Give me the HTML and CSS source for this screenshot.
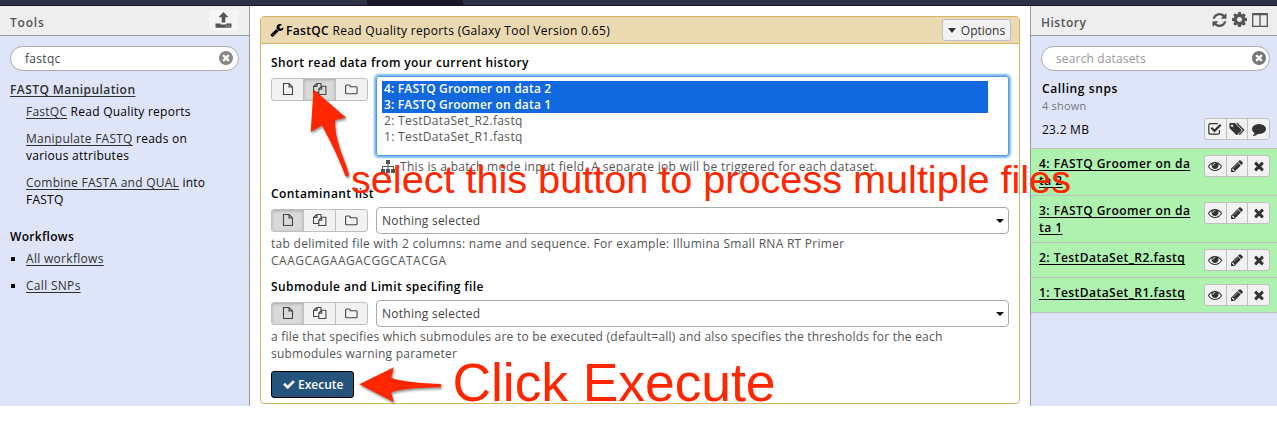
FILE: index.html
```html
<!DOCTYPE html>
<html lang="en">
<head>
<meta charset="utf-8">
<title>Galaxy</title>
<link rel="stylesheet" href="styles.css">
</head>
<body>
<svg class="defs" width="0" height="0">
  <symbol id="wrench" viewBox="0 0 1792 1792"><path d="M448 1472q0-26-19-45t-45-19-45 19-19 45 19 45 45 19 45-19 19-45zm644-420l-682 682q-37 37-90 37-52 0-91-37l-106-108q-38-36-38-90 0-53 38-91l681-681q39 98 114.5 173.5t173.5 114.5zm634-435q0 39-23 106-47 134-164.5 217.5t-258.5 83.5q-185 0-316.5-131.5t-131.5-316.5 131.5-316.5 316.5-131.5q58 0 121.5 16.5t107.5 46.5q16 11 16 28t-16 28l-293 169v224l193 107q5-3 79-48.5t135.5-81 70.5-35.5q15 0 23.5 10t8.5 25z"/></symbol>
  <symbol id="times" viewBox="0 0 1792 1792"><path d="M1490 1322q0 40-28 68l-136 136q-28 28-68 28t-68-28l-294-294-294 294q-28 28-68 28t-68-28l-136-136q-28-28-28-68t28-68l294-294-294-294q-28-28-28-68t28-68l136-136q28-28 68-28t68 28l294 294 294-294q28-28 68-28t68 28l136 136q28 28 28 68t-28 68l-294 294 294 294q28 28 28 68z"/></symbol>
  <symbol id="clear" viewBox="128 128 1536 1536"><path d="M1277 1122q0-26-19-45l-181-181 181-181q19-19 19-45 0-27-19-46l-90-90q-19-19-46-19-26 0-45 19l-181 181-181-181q-19-19-45-19-27 0-46 19l-90 90q-19 19-19 46 0 26 19 45l181 181-181 181q-19 19-19 45 0 27 19 46l90 90q19 19 46 19 26 0 45-19l181-181 181 181q19 19 45 19 27 0 46-19l90-90q19-19 19-46zm387-226q0 209-103 385.5t-279.5 279.5-385.5 103-385.5-103-279.5-279.5-103-385.5 103-385.5 279.5-279.5 385.5-103 385.5 103 279.5 279.5 103 385.5z"/></symbol>
  <symbol id="check" viewBox="0 0 1792 1792"><path d="M1671 566q0 40-28 68l-724 724-136 136q-28 28-68 28t-68-28l-136-136-362-362q-28-28-28-68t28-68l136-136q28-28 68-28t68 28l294 295 656-657q28-28 68-28t68 28l136 136q28 28 28 68z"/></symbol>
  <symbol id="pencil" viewBox="0 0 1792 1792"><path d="M491 1536l91-91-235-235-91 91v107h128v128h107zm523-928q0-22-22-22-10 0-17 7l-542 542q-7 7-7 17 0 22 22 22 10 0 17-7l542-542q7-7 7-17zm-54-192l416 416-832 832h-416v-416zm683 96q0 53-37 90l-166 166-416-416 166-165q36-38 90-38 53 0 91 38l235 234q37 39 37 91z"/></symbol>
  <symbol id="eye" viewBox="0 0 1792 1792"><path d="M1664 960q-152-236-381-353 61 104 61 225 0 185-131.5 316.5t-316.5 131.5-316.5-131.5-131.5-316.5q0-121 61-225-229 117-381 353 133 205 333.5 326.5t434.5 121.5 434.5-121.5 333.5-326.5zm-720-384q0-20-14-34t-34-14q-125 0-214.5 89.5t-89.5 214.5q0 20 14 34t34 14 34-14 14-34q0-86 61-147t147-61q20 0 34-14t14-34zm848 384q0 34-20 69-140 230-376.5 368.5t-499.5 138.5-499.5-139-376.5-368q-20-35-20-69t20-69q140-229 376.5-368t499.5-139 499.5 139 376.5 368q20 35 20 69z"/></symbol>
  <symbol id="refresh" viewBox="128 128 1536 1536"><path d="M1639 1056q0 5-1 7-64 268-268 434.5t-478 166.5q-146 0-282.5-55t-243.5-157l-129 129q-19 19-45 19t-45-19-19-45v-448q0-26 19-45t45-19h448q26 0 45 19t19 45-19 45l-137 137q71 66 161 102t187 36q134 0 250-65t186-179q11-17 53-117 8-23 30-23h192q13 0 22.5 9.5t9.5 22.5zm25-800v448q0 26-19 45t-45 19h-448q-26 0-45-19t-19-45 19-45l138-138q-148-137-349-137-134 0-250 65t-186 179q-11 17-53 117-8 23-30 23h-199q-13 0-22.5-9.5t-9.5-22.5v-7q65-268 270-434.5t480-166.5q146 0 284 55.5t245 156.5l130-129q19-19 45-19t45 19 19 45z"/></symbol>
  <symbol id="cog" viewBox="128 128 1536 1536"><path d="M1152 896q0-106-75-181t-181-75-181 75-75 181 75 181 181 75 181-75 75-181zm512-109v222q0 12-8 23t-20 13l-185 28q-19 54-39 91 35 50 107 138 10 12 10 25t-9 23q-27 37-99 108t-94 71q-12 0-26-9l-138-108q-44 23-91 38-16 136-29 186-7 28-36 28h-222q-14 0-24.5-8.5t-11.5-21.5l-28-184q-49-16-90-37l-141 107q-10 9-25 9-14 0-25-11-126-114-165-168-7-10-7-23 0-12 8-23 15-21 51-66.5t54-70.5q-27-50-41-99l-183-27q-13-2-21-12.5t-8-23.5v-222q0-12 8-23t19-13l186-28q14-46 39-92-40-57-107-138-10-12-10-24 0-10 9-23 26-36 98.5-107.5t94.5-71.5q13 0 26 10l138 107q44-23 91-38 16-136 29-186 7-28 36-28h222q14 0 24.5 8.5t11.5 21.5l28 184q49 16 90 37l142-107q9-9 24-9 13 0 25 10 129 119 165 170 7 8 7 22 0 12-8 23-15 21-51 66.5t-54 70.5q26 50 41 98l183 28q13 2 21 12.5t8 23.5z"/></symbol>
  <symbol id="comment" viewBox="0 0 1792 1792"><path d="M1792 896q0 174-120 321.5t-326 233-450 85.5q-70 0-145-8-198 175-460 242-49 14-114 22-17 2-30.5-9t-17.5-29v-1q-3-4-.5-12t2-10 4.5-9.5l6-9 7-8.5 8-9q7-8 31-34.5t34.5-38 31-39.5 32.5-51 27-59 26-76q-157-89-247.5-220t-90.5-281q0-174 120-321.5t326-233 450-85.5 450 85.5 326 233 120 321.5z"/></symbol>
  <symbol id="upload" viewBox="0 0 16 16"><path d="M8 0 13 5.2H9.8V10.500H6.200V5.200H3zM0 11.500h5.200v1h5.600v-1H16v3.500a.8.800 0 0 1-.8.800H.8A.8.800 0 0 1 0 15zM11 13.500v1h1v-1zM13.200 13.500v1h1v-1z" fill-rule="evenodd"/></symbol>
  <symbol id="columns" viewBox="0 0 16 14"><path d="M.7.700h14.600v12.600H.7zM8 1v12M1 1.500h14" fill="none" stroke="currentColor" stroke-width="1.300"/></symbol>
  <symbol id="checkbox" viewBox="0 0 14 14"><path d="M11.500 8v2.500a1.700 1.700 0 0 1-1.700 1.700H2.500A1.700 1.700 0 0 1 .8 10.500V3.300a1.700 1.700 0 0 1 1.700-1.700h7.300" fill="none" stroke="currentColor" stroke-width="1.200"/><path d="M3.400 5.800 6.500 8.900 12.700 2.700" fill="none" stroke="currentColor" stroke-width="2.200"/></symbol>
  <symbol id="tags" viewBox="0 0 16 14"><path d="M1 1h4.800L12.300 7.500a1 1 0 0 1 0 1.300l-3.900 3.900a1 1 0 0 1-1.300 0L.5 6.200V1.500A.5.500 0 0 1 1 1zM3 2.500a1.200 1.200 0 1 0 .1 0z" fill-rule="evenodd"/><path d="M8 1.300 14.700 8.100 10.200 12.800" fill="none" stroke="currentColor" stroke-width="1.300"/></symbol>
  <symbol id="sitemap" viewBox="0 0 14 13"><path d="M5 0h4v4H7.500v2H13v3h1v4h-4V9h2V7H7.500v2H9v4H5V9h1.500V7H2v2h2v4H0V9h1V6h5.500V4H5z"/></symbol>
  <symbol id="file" viewBox="0 0 12 14"><path d="M1.500 1.500h5.500l3.500 3.500v7.500h-9zM7 1.500V5h3.500" fill="none" stroke="currentColor" stroke-width="1.100"/></symbol>
  <symbol id="files" viewBox="0 0 14 14"><path d="M5.500 10.500h-5V4.500l3.500-3h4v2.700M4 1.500v3H.5M8.700 4.300h4.200v8.200H5.800V7zM8.700 4.300v3H5.800" fill="none" stroke="currentColor" stroke-width="1.100" stroke-linejoin="round"/></symbol>
  <symbol id="folder" viewBox="0 0 13 11"><path d="M.6 8.800V2a1 1 0 0 1 1-1h2.600a1 1 0 0 1 1 1v.7h5.900a1 1 0 0 1 1 1v5.100a1 1 0 0 1-1 1H1.600a1 1 0 0 1-1-1z" fill="none" stroke="currentColor" stroke-width="1.100"/></symbol>
</svg>

<header class="masthead"><span class="masthead-tab"></span></header>

<main class="workspace">
  <aside class="panel tools">
    <div class="panel-head"><h2>Tools</h2><span class="upload-btn"><svg class="i16"><use href="#upload"/></svg></span></div>
    <div class="search"><span class="t-query">fastqc</span><svg class="i14"><use href="#clear"/></svg></div>
    <h3 class="section"><a class="t-section">FASTQ Manipulation</a></h3>
    <ul class="tool-list">
      <li><a>FastQC</a> Read Quality reports</li>
      <li><a>Manipulate FASTQ</a> reads on<br>various attributes</li>
      <li><a>Combine FASTA and QUAL</a> into<br>FASTQ</li>
    </ul>
    <h3 class="workflows">Workflows</h3>
    <ul class="workflow-list">
      <li><a>All workflows</a></li>
      <li><a>Call SNPs</a></li>
    </ul>
  </aside>

  <section class="center">
    <form class="tool-form">
      <div class="form-head">
        <svg class="i14 wrench"><use href="#wrench"/></svg>
        <span class="form-title"><b>FastQC</b> Read Quality reports (Galaxy Tool Version 0.65)</span>
        <span class="options"><i class="caret"></i>Options</span>
      </div>
      <div class="form-body">
        <label class="first">Short read data from your current history</label>
        <div class="row multi">
          <div class="btns"><span><svg class="file"><use href="#file"/></svg></span><span class="on"><svg class="files"><use href="#files"/></svg></span><span><svg class="folder"><use href="#folder"/></svg></span></div>
          <div class="listbox">
            <div class="sel">4: FASTQ Groomer on data 2</div>
            <div class="sel">3: FASTQ Groomer on data 1</div>
            <div>2: TestDataSet_R2.fastq</div>
            <div>1: TestDataSet_R1.fastq</div>
          </div>
        </div>
        <p class="batch"><svg class="sitemap"><use href="#sitemap"/></svg>This is a batch mode input field. A separate job will be triggered for each dataset.</p>
        <label class="l-contaminant">Contaminant list</label>
        <div class="row">
          <div class="btns"><span class="on"><svg class="file"><use href="#file"/></svg></span><span><svg class="files"><use href="#files"/></svg></span><span><svg class="folder"><use href="#folder"/></svg></span></div>
          <div class="select">Nothing selected<i class="caret small"></i></div>
        </div>
        <p class="help h1">tab delimited file with 2 columns: name and sequence. For example: Illumina Small RNA RT Primer<br><span class="seq">CAAGCAGAAGACGGCATACGA</span></p>
        <label class="l-sub">Submodule and Limit specifing file</label>
        <div class="row">
          <div class="btns"><span class="on"><svg class="file"><use href="#file"/></svg></span><span><svg class="files"><use href="#files"/></svg></span><span><svg class="folder"><use href="#folder"/></svg></span></div>
          <div class="select">Nothing selected<i class="caret small"></i></div>
        </div>
        <p class="help h2">a file that specifies which submodules are to be executed (default=all) and also specifies the thresholds for the each<br>submodules warning parameter</p>
        <span class="execute"><svg class="i12"><use href="#check"/></svg>Execute</span>
      </div>
    </form>
  </section>

  <aside class="panel history">
    <div class="panel-head"><h2>History</h2><span class="head-icons"><svg class="refresh"><use href="#refresh"/></svg><svg class="cog"><use href="#cog"/></svg><svg class="columns"><use href="#columns"/></svg></span></div>
    <div class="search placeholder"><span>search datasets</span><svg class="i14"><use href="#clear"/></svg></div>
    <div class="meta">
      <h3>Calling snps</h3>
      <p class="shown">4 shown</p>
      <div class="size"><span>23.2 MB</span><div class="acts"><span><svg><use href="#checkbox"/></svg></span><span><svg class="tags"><use href="#tags"/></svg></span><span><svg><use href="#comment"/></svg></span></div></div>
    </div>
    <div class="dataset tall"><a>4: FASTQ Groomer on da<br>ta 2</a><div class="acts"><span><svg><use href="#eye"/></svg></span><span><svg><use href="#pencil"/></svg></span><span><svg><use href="#times"/></svg></span></div></div>
    <div class="dataset tall"><a>3: FASTQ Groomer on da<br>ta 1</a><div class="acts"><span><svg><use href="#eye"/></svg></span><span><svg><use href="#pencil"/></svg></span><span><svg><use href="#times"/></svg></span></div></div>
    <div class="dataset"><a>2: TestDataSet_R2.fastq</a><div class="acts"><span><svg><use href="#eye"/></svg></span><span><svg><use href="#pencil"/></svg></span><span><svg><use href="#times"/></svg></span></div></div>
    <div class="dataset"><a>1: TestDataSet_R1.fastq</a><div class="acts"><span><svg><use href="#eye"/></svg></span><span><svg><use href="#pencil"/></svg></span><span><svg><use href="#times"/></svg></span></div></div>
  </aside>
</main>

<svg class="annotations" width="1277" height="428" viewBox="0 0 1277 428">
  <g class="arrows">
    <path d="M313.500 89.500 346.300 117.700 335.300 120Q334 131 341 152Q347 167 349 174.500Q347.500 178 345.500 176Q336 151 322 125.500L310.700 132z"/>
    <path d="M359.300 384.300 393.800 367.300 391.300 377.500Q400 382.200 440.500 384Q442.500 385.500 440.500 387.200Q400 388 391.300 392.500L393.800 402.300z"/>
  </g>
  <text x="351" y="193.300" font-size="39.700" textLength="720">select this button to process multiple files</text>
  <text x="452.500" y="401" font-size="53.500" textLength="323">Click Execute</text>
</svg>
</body>
</html>
```
FILE: styles.css
```css
* { box-sizing: border-box; }
body {
  margin: 0;
  width: 1277px;
  height: 428px;
  overflow: hidden;
  background: #fff;
  color: #000;
  font: 12px/17px "Open Sans", "Noto Sans", sans-serif;
}
h2, h3, p, ul { margin: 0; padding: 0; font-size: 12px; line-height: 17px; }
ul { list-style: none; }
svg { display: block; fill: currentColor; flex: none; }
.defs { position: absolute; }
b, h2, h3, label { font-weight: 600; }

.masthead { height: 6px; background: #2c3143; border-bottom: 1px solid #1a1128; padding-left: 367px; }
.masthead-tab { display: block; width: 96px; height: 5px; background: #181824; }

.workspace { display: flex; height: 400px; }
.panel { background: #dfe5f9; }
.tools { width: 250px; border-right: 1px solid #999; }
.center { flex: 1; padding: 10px 10px 0; }
.history { width: 247px; border-left: 1px solid #999; }
.panel-head {
  height: 30px;
  display: flex;
  align-items: center;
  justify-content: space-between;
  padding: 3px 11px 0 10px;
  background: #eee;
  border-bottom: 1px solid #999;
  color: #555;
}
.panel-head h2 { letter-spacing: .5px; }
.tools .panel-head h2 { letter-spacing: .8px; }
.upload-btn { width: 29px; height: 21px; margin-top: -4px; padding: 2px 6px; border-radius: 3px; background: #f5f5f5; }
.i16 { width: 17px; height: 16px; }
.i14 { width: 14px; height: 14px; }
.i12 { width: 14px; height: 13px; }

.search {
  display: flex;
  align-items: center;
  justify-content: space-between;
  height: 25px;
  margin: 10px 10px 0;
  padding: 0 5px 1px 14px;
  border: 1px solid #aaa;
  border-radius: 13px;
  background: #fff;
  color: #444;
}
.search svg { color: #888; }
.tools .search { letter-spacing: .3px; }
.history .placeholder { color: #999; margin-right: 7px; padding-right: 3px; letter-spacing: .15px; }
.placeholder svg { color: #777; }

a { color: #303030; text-decoration: underline; text-underline-offset: 2px; text-decoration-skip-ink: none; }
.section { margin: 10px 0 0 10px; letter-spacing: .43px; }
.tool-list { padding: 5px 0 0 26px; }
.tool-list li { margin-bottom: 10px; letter-spacing: .25px; }
.workflows { margin: 20px 0 5px 10px; letter-spacing: .3px; }
.workflow-list { padding-left: 11px; letter-spacing: .3px; }
.workflow-list li { display: flex; align-items: center; gap: 11px; margin-bottom: 10px; }
.workflow-list li::before { content: ""; width: 4px; height: 4px; background: #000; }

.tool-form { height: 388px; border: 1px solid #d8b365; border-radius: 4px; }
.form-head {
  display: flex;
  align-items: center;
  height: 27px;
  padding: 0 8px 0 9px;
  border-bottom: 1px solid #d8b365;
  background: #ebd9b2;
}
.wrench { margin-right: 2px; }
.form-title { flex: 1; letter-spacing: .33px; }
.options {
  display: flex;
  align-items: center;
  justify-content: center;
  gap: 5px;
  width: 69px;
  height: 22px;
  border: 1px solid #bfbfbf;
  border-radius: 3px;
  background: #f2f2f2;
  color: #333;
}
.caret { width: 0; height: 0; border: 4px solid transparent; border-top: 5px solid #333; border-bottom: 0; }
.form-body { padding: 10px 10px 0; }
label { display: block; letter-spacing: .4px; }
.first { margin-bottom: 5px; }
.row { display: flex; justify-content: space-between; }
.btns { display: flex; width: 97px; height: 23px; margin-top: 2px; border: 1px solid #bfbfbf; border-radius: 3px; background: #f2f2f2; color: #444; overflow: hidden; }
.btns span { flex: 1; display: flex; align-items: center; justify-content: center; padding-bottom: 1px; }
.btns span + span { border-left: 1px solid #bfbfbf; }
.btns .on { background: #d9d9d9; box-shadow: inset 0 1px 3px #aaa; }
.file { width: 12px; height: 14px; }
.files { width: 14px; height: 14px; }
.folder { width: 13px; height: 11px; }
.multi { height: 82px; }
.listbox {
  width: 633px;
  height: 80px;
  padding: 4px 20px 0 5px;
  border: 1px solid #4f9be8;
  border-radius: 3px;
  box-shadow: 0 0 2px 2px #7db5ee;
  color: #555;
  line-height: 16px;
  letter-spacing: .33px;
}
.listbox div { padding-left: 2px; }
.listbox .sel { background: #1168df; color: #fff; font-weight: 600; letter-spacing: .17px; }
.batch { display: flex; align-items: center; height: 17px; margin-left: 110px; color: #555; letter-spacing: .32px; }
.sitemap { width: 14px; height: 13px; margin-right: 5px; }
.l-contaminant { margin: 10px 0 5px; }
.select {
  display: flex;
  align-items: center;
  justify-content: space-between;
  width: 633px;
  height: 27px;
  padding: 0 4px 0 5px;
  border: 1px solid #aaa;
  border-radius: 4px;
  color: #444;
  letter-spacing: .25px;
}
.select .caret { border-top-color: #000; border-top-width: 4px; }
.help { color: #555; margin-top: 1px; letter-spacing: .28px; }
.h2 { letter-spacing: .23px; }
.seq { letter-spacing: .5px; }
.l-sub { margin: 9px 0 5px; }
.execute {
  display: flex;
  align-items: center;
  gap: 2px;
  width: 83px;
  height: 27px;
  margin-top: 9px;
  padding-left: 10px;
  border: 1px solid #000;
  border-radius: 3px;
  background: #25537b;
  color: #fff;
  font-weight: 600;
}

.history .panel-head { padding-right: 9px; }
.head-icons { display: flex; align-items: center; gap: 5px; margin-top: -5px; }
.refresh { width: 15px; height: 14px; }
.cog { width: 15px; height: 15px; }
.columns { width: 16px; height: 14px; }
.meta { height: 77px; padding: 9px 7px 0 11px; }
.meta h3 { letter-spacing: .6px; }
.shown { color: #777; font-size: 11px; letter-spacing: .2px; }
.size { display: flex; justify-content: space-between; align-items: center; margin-top: 4px; letter-spacing: .25px; }
.acts { display: flex; width: 66px; height: 22px; border: 1px solid #bfbfbf; border-radius: 3px; background: #f2f2f2; color: #333; flex: none; }
.acts span { flex: 1; display: flex; align-items: center; justify-content: center; }
.acts span + span { border-left: 1px solid #bfbfbf; }
.acts svg { width: 14px; height: 14px; }
.acts .tags { width: 16px; }
.dataset {
  display: flex;
  justify-content: space-between;
  height: 35px;
  padding: 6px 7px 0 8px;
  border-top: 1px solid #bfbfbf;
  background: #aff1af;
}
.dataset.tall { height: 47px; }
.dataset:last-child { height: 36px; border-bottom: 1px solid #bfbfbf; }
.dataset a { color: #000; font-weight: 600; letter-spacing: .46px; }

.annotations { position: absolute; left: 0; top: 0; color: #ff2600; pointer-events: none; }
.annotations text { font-family: "Liberation Sans", Arial, sans-serif; }
.arrows { filter: drop-shadow(1px 2px 1px rgba(0, 0, 0, .4)); }
```
